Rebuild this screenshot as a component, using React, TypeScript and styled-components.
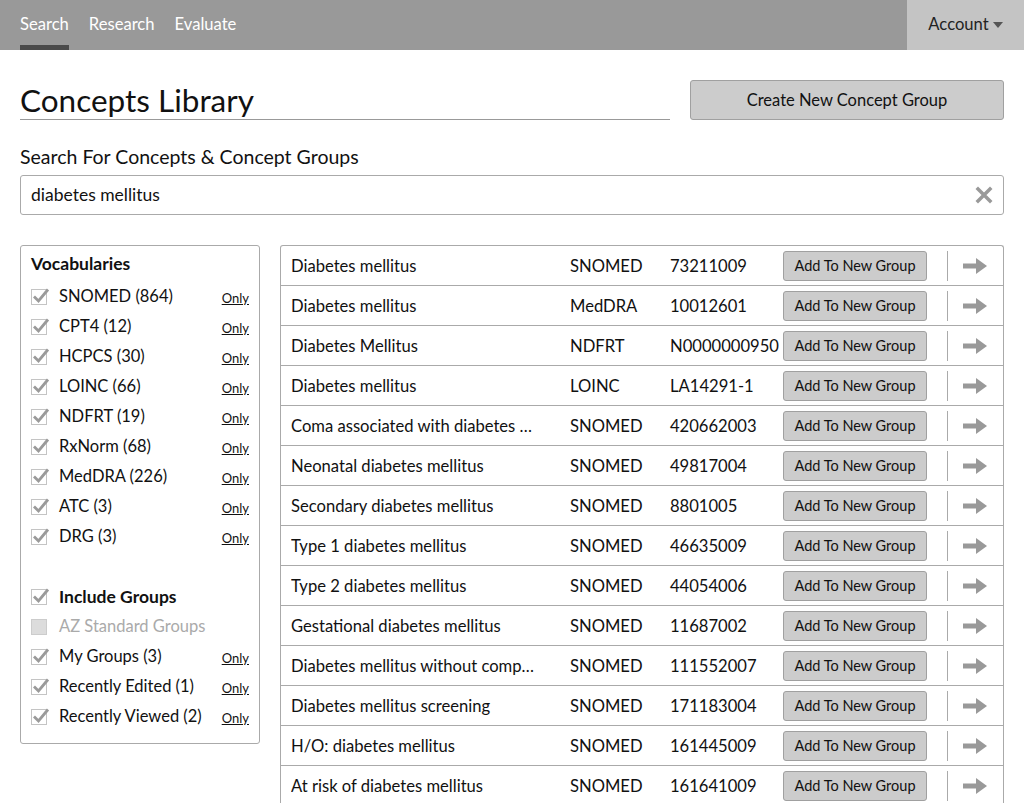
import React from "react";
import styled, { createGlobalStyle } from "styled-components";

const Global = createGlobalStyle`
  html, body { margin: 0; padding: 0; background: #fff; }
  body { font-family: Lato, "Noto Sans", sans-serif; color: #111; }
  * { box-sizing: border-box; }
`;

const NavBar = styled.div`
  height: 50px;
  background: #999999;
  display: flex;
  align-items: stretch;
  justify-content: space-between;
`;
const NavLinks = styled.div`
  display: flex;
  gap: 20px;
  padding-left: 20px;
`;
const NavLink = styled.div<{ $active?: boolean }>`
  color: #fff;
  font-size: 16.6px;
  display: flex;
  align-items: center;
  padding-bottom: 4px;
  border-bottom: 5px solid ${(p) => (p.$active ? "#4a4a4a" : "transparent")};
  padding-top: 7px;
`;
const Account = styled.div`
  width: 117px;
  background: #c4c4c4;
  color: #222;
  font-size: 16.6px;
  display: flex;
  align-items: center;
  justify-content: center;
  gap: 4px;
  padding-bottom: 2px;
`;
const Caret = styled.span`
  width: 0;
  height: 0;
  border-left: 5px solid transparent;
  border-right: 5px solid transparent;
  border-top: 6px solid #555;
  margin-top: 2px;
`;

const Main = styled.div`
  padding: 30px 20px 0;
`;
const TitleRow = styled.div`
  display: flex;
  gap: 20px;
  align-items: flex-start;
`;
const Title = styled.h1`
  flex: 1;
  margin: 0;
  font-size: 31.5px;
  font-weight: 400;
  line-height: 38px;
  border-bottom: 1px solid #999;
  padding-top: 1px;
  color: #111;
`;
const PrimaryButton = styled.button`
  width: 314px;
  height: 40px;
  background: #cccccc;
  border: 1px solid #a0a0a0;
  border-radius: 3px;
  font-family: inherit;
  font-size: 16.5px;
  color: #111;
`;
const SearchLabel = styled.div`
  font-size: 19.5px;
  margin-top: 25px;
  line-height: 24px;
`;
const SearchBox = styled.div`
  margin-top: 6px;
  height: 40px;
  border: 1px solid #aaa;
  border-radius: 3px;
  display: flex;
  align-items: center;
  padding: 0 10px;
  justify-content: space-between;
`;
const SearchText = styled.span`
  font-size: 17.5px;
  padding-bottom: 2px;
`;
const Body = styled.div`
  display: flex;
  gap: 20px;
  margin-top: 30px;
  align-items: flex-start;
`;
const Sidebar = styled.div`
  width: 240px;
  border: 1px solid #aaa;
  border-radius: 3px;
  padding: 7px 10px 12px;
`;
const SideHeading = styled.div`
  font-size: 17.5px;
  font-weight: 700;
  line-height: 22px;
  margin-bottom: 6px;
`;
const FilterRow = styled.div<{ $bold?: boolean; $disabled?: boolean }>`
  height: 30px;
  display: flex;
  align-items: center;
  font-size: ${(p) => (p.$bold ? "17.5px" : "16.5px")};
  font-weight: ${(p) => (p.$bold ? 700 : 400)};
  color: ${(p) => (p.$disabled ? "#aaa" : "#111")};
`;
const FilterLabel = styled.span`
  flex: 1;
  margin-left: 9px;
`;
const Only = styled.a`
  font-size: 13px;
  color: #111;
  text-decoration: underline;
  padding-top: 3px;
`;
const GroupGap = styled.div`
  height: 30px;
`;

const Table = styled.div`
  flex: 1;
  border: 1px solid #aaa;
  border-radius: 3px 3px 0 0;
  border-bottom: none;
`;
const Row = styled.div`
  display: grid;
  grid-template-columns: 279px 100px 113px 144px 1fr;
  align-items: center;
  height: 40px;
  border-bottom: 1px solid #aaa;
  padding-left: 10px;
  font-size: 16.6px;
`;
const NameCell = styled.div`
  white-space: nowrap;
  overflow: hidden;
  text-overflow: ellipsis;
  padding-right: 36px;
`;
const Cell = styled.div`
  white-space: nowrap;
`;
const AddButton = styled.button`
  height: 30px;
  width: 144px;
  background: #cccccc;
  border: 1px solid #a0a0a0;
  border-radius: 3px;
  font-family: inherit;
  font-size: 14.5px;
  color: #111;
  padding: 0;
`;
const ArrowCell = styled.div`
  display: flex;
  align-items: center;
  height: 30px;
  padding-left: 20px;
`;
const Divider = styled.div`
  width: 1px;
  height: 30px;
  background: #aaa;
`;
const ArrowWrap = styled.div`
  margin-left: 15px;
  display: flex;
  align-items: center;
`;

const CheckBox = ({ checked = true, disabled = false }: { checked?: boolean; disabled?: boolean }) => (
  <svg width="19" height="18" viewBox="0 0 19 18">
    <rect x="0.5" y="2.5" width="15" height="15" fill={disabled ? "#dcdcdc" : "#fff"} stroke={disabled ? "#ccc" : "#c4c4c4"} />
    {checked && !disabled && (
      <path d="M3 9.5 L7.5 14 L17 2.5" fill="none" stroke="#9a9a9a" strokeWidth="2.8" />
    )}
  </svg>
);

const Arrow = () => (
  <svg width="24" height="16" viewBox="0 0 24 16">
    <rect x="0" y="5.5" width="14" height="5" fill="#999" />
    <path d="M13 0 L24 8 L13 16 Z" fill="#999" />
  </svg>
);

const ClearIcon = () => (
  <svg width="18" height="18" viewBox="0 0 18 18">
    <path d="M3 3 L15 15 M15 3 L3 15" stroke="#999" strokeWidth="3.5" strokeLinecap="square" />
  </svg>
);

const vocabs = [
  "SNOMED (864)",
  "CPT4 (12)",
  "HCPCS (30)",
  "LOINC (66)",
  "NDFRT (19)",
  "RxNorm (68)",
  "MedDRA (226)",
  "ATC (3)",
  "DRG (3)",
];

const rows: [string, string, string][] = [
  ["Diabetes mellitus", "SNOMED", "73211009"],
  ["Diabetes mellitus", "MedDRA", "10012601"],
  ["Diabetes Mellitus", "NDFRT", "N0000000950"],
  ["Diabetes mellitus", "LOINC", "LA14291-1"],
  ["Coma associated with diabetes mellitus", "SNOMED", "420662003"],
  ["Neonatal diabetes mellitus", "SNOMED", "49817004"],
  ["Secondary diabetes mellitus", "SNOMED", "8801005"],
  ["Type 1 diabetes mellitus", "SNOMED", "46635009"],
  ["Type 2 diabetes mellitus", "SNOMED", "44054006"],
  ["Gestational diabetes mellitus", "SNOMED", "11687002"],
  ["Diabetes mellitus without complication", "SNOMED", "111552007"],
  ["Diabetes mellitus screening", "SNOMED", "171183004"],
  ["H/O: diabetes mellitus", "SNOMED", "161445009"],
  ["At risk of diabetes mellitus", "SNOMED", "161641009"],
];

export default function App() {
  return (
    <>
      <Global />
      <NavBar>
        <NavLinks>
          <NavLink $active>Search</NavLink>
          <NavLink>Research</NavLink>
          <NavLink>Evaluate</NavLink>
        </NavLinks>
        <Account>
          Account <Caret />
        </Account>
      </NavBar>
      <Main>
        <TitleRow>
          <Title>Concepts Library</Title>
          <PrimaryButton>Create New Concept Group</PrimaryButton>
        </TitleRow>
        <SearchLabel>Search For Concepts &amp; Concept Groups</SearchLabel>
        <SearchBox>
          <SearchText>diabetes mellitus</SearchText>
          <ClearIcon />
        </SearchBox>
        <Body>
          <Sidebar>
            <SideHeading>Vocabularies</SideHeading>
            {vocabs.map((v) => (
              <FilterRow key={v}>
                <CheckBox />
                <FilterLabel>{v}</FilterLabel>
                <Only>Only</Only>
              </FilterRow>
            ))}
            <GroupGap />
            <FilterRow $bold>
              <CheckBox />
              <FilterLabel>Include Groups</FilterLabel>
            </FilterRow>
            <FilterRow $disabled>
              <CheckBox disabled />
              <FilterLabel>AZ Standard Groups</FilterLabel>
            </FilterRow>
            <FilterRow>
              <CheckBox />
              <FilterLabel>My Groups (3)</FilterLabel>
              <Only>Only</Only>
            </FilterRow>
            <FilterRow>
              <CheckBox />
              <FilterLabel>Recently Edited (1)</FilterLabel>
              <Only>Only</Only>
            </FilterRow>
            <FilterRow>
              <CheckBox />
              <FilterLabel>Recently Viewed (2)</FilterLabel>
              <Only>Only</Only>
            </FilterRow>
          </Sidebar>
          <Table>
            {rows.map(([name, vocab, code], i) => (
              <Row key={i}>
                <NameCell>{name}</NameCell>
                <Cell>{vocab}</Cell>
                <Cell>{code}</Cell>
                <AddButton>Add To New Group</AddButton>
                <ArrowCell>
                  <Divider />
                  <ArrowWrap>
                    <Arrow />
                  </ArrowWrap>
                </ArrowCell>
              </Row>
            ))}
          </Table>
        </Body>
      </Main>
    </>
  );
}
